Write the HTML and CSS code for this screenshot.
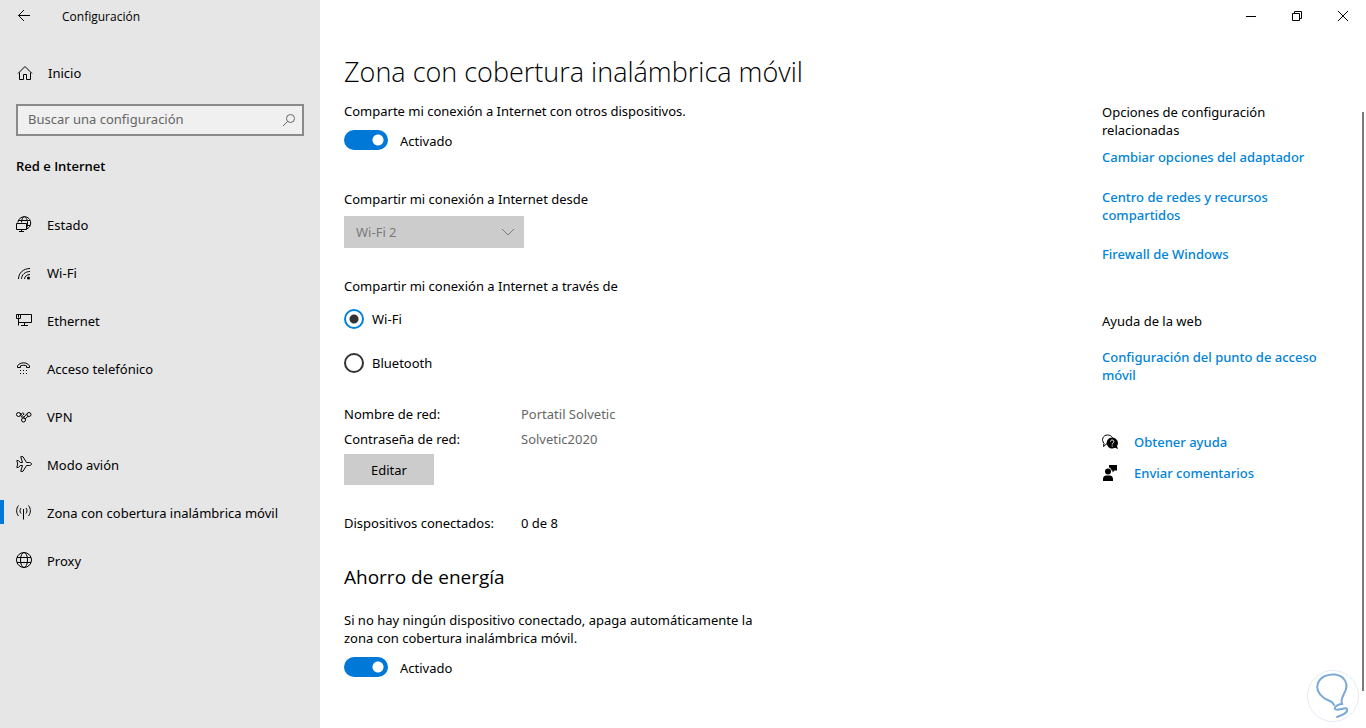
FILE: index.html
```html
<!DOCTYPE html>
<html lang="es">
<head>
    <meta charset="UTF-8">
    <meta name="viewport" content="width=device-width, initial-scale=1.0">
    <title>Configuración</title>
    <link rel="stylesheet" href="styles.css">
</head>
<body>
    <div class="window">
        <!-- Sidebar -->
        <aside class="sidebar">
            <div class="app-bar">
                <button class="back" aria-label="Atrás">
                    <svg width="16" height="16" viewBox="0 0 16 16"><path d="M14 7.500H2.500M8 2L2.500 7.500L8 13"/></svg>
                </button>
                <span class="app-name">Configuración</span>
            </div>
            <a class="nav-link home" href="#">
                <svg width="18" height="16" viewBox="0 0 18 16"><path d="M2 8.500L9 1.500L16 8.500M3.500 7.500V14.500H7.500V9.500H10.500V14.500H14.500V7.500"/></svg>
                Inicio
            </a>
            <div class="search">
                <input type="text" placeholder="Buscar una configuración" aria-label="Buscar una configuración">
                <svg width="14" height="14" viewBox="0 0 14 14"><circle cx="8.500" cy="5.500" r="4"/><path d="M5.500 8.500L1 13"/></svg>
            </div>
            <h2 class="section-name">Red e Internet</h2>
            <nav>
                <a class="nav-link" href="#">
                    <svg width="16" height="16" viewBox="0 0 16 16"><path d="M1.800 6.500C2.400 3 5 .700 8.500 .700C12 .700 14.700 3.500 14.700 7C14.700 10.200 12.800 12.300 10.500 13M2.500 4.500H14M11 9.500H14M5.500 6.500C5.700 3 7 .700 8.300 .700S11.500 3.500 11.500 7C11.500 8.800 11.200 10.500 10.700 12"/><path d="M.5 7.500H10.500V13.500H.5ZM5.500 13.500V15.500M3 15.500H8"/></svg>
                    Estado
                </a>
                <a class="nav-link" href="#">
                    <svg width="16" height="16" viewBox="0 0 16 16"><path d="M2.500 15C2.500 9 7.500 4.500 14 4.500M5.500 15C5.500 10.800 9.300 7.500 14 7.500M8.500 15C8.500 12.500 11 10.500 14 10.500"/><circle class="solid" cx="12.500" cy="14" r="1.500"/></svg>
                    Wi-Fi
                </a>
                <a class="nav-link" href="#">
                    <svg width="16" height="16" viewBox="0 0 16 16"><path d="M4.500 2.500H15.500V10.500H2.500V7M.5 2.500H4.500V6.500H.5ZM2.500 3V5.500M2.500 10V13.500M8.500 10.500V13.500M5 13.500H12"/></svg>
                    Ethernet
                </a>
                <a class="nav-link" href="#">
                    <svg width="16" height="16" viewBox="0 0 16 16"><path d="M1.500 7.500V6C3.500 1.800 11.500 1.800 13.500 6V7.500H10.500V5.800C9 5.100 6 5.100 4.500 5.800V7.500Z"/><path class="solid" d="M4 10h1v1h-1zM7 10h1v1h-1zM10 10h1v1h-1zM4 13h1v1h-1zM7 13h1v1h-1zM10 13h1v1h-1z"/></svg>
                    Acceso telefónico
                </a>
                <a class="nav-link" href="#">
                    <svg width="16" height="16" viewBox="0 0 16 16"><circle cx="2.500" cy="6.500" r="2"/><circle cx="13" cy="6.500" r="2"/><circle cx="7.500" cy="12" r="2"/><path d="M4 5L8.500 10.200M4.500 7.500L6.500 10.200M11.200 5.500L7.500 9.500M12 8.300L9 11M5.500 5.500C7 4.300 8.500 5 7.500 7"/></svg>
                    VPN
                </a>
                <a class="nav-link" href="#">
                    <svg width="16" height="16" viewBox="0 0 16 16"><path d="M.8 4.500H2.500L4.200 6.500H6.500L4.700 .700H7L10.500 6.500H13.500C14.800 6.500 15.500 7.200 15.500 8S14.800 9.500 13.500 9.500H10.500L7 15.300H4.700L6.500 9.500H4.200L2.500 11.500H.8L1.700 8Z"/></svg>
                    Modo avión
                </a>
                <a class="nav-link active" href="#" aria-current="page">
                    <svg width="16" height="16" viewBox="0 0 16 16"><path d="M7.500 5V15.500M5 4C3.700 5.500 3.700 8 5 9.500M2.500 1.500C0 4.500 0 9 2.500 12M10 4C11.300 5.500 11.300 8 10 9.500M12.500 1.500C15 4.500 15 9 12.500 12"/></svg>
                    Zona con cobertura inalámbrica móvil
                </a>
                <a class="nav-link" href="#">
                    <svg width="16" height="16" viewBox="0 0 16 16"><circle cx="8" cy="8" r="7.500"/><ellipse cx="8" cy="8" rx="3.500" ry="7.500"/><path d="M1 5.500H15M1 10.500H15"/></svg>
                    Proxy
                </a>
            </nav>
        </aside>

        <!-- Main area -->
        <div class="main">
            <div class="title-bar">
                <button aria-label="Minimizar"><svg width="12" height="12" viewBox="0 0 12 12"><path d="M1 6.500H11"/></svg></button>
                <button aria-label="Restaurar"><svg width="12" height="12" viewBox="0 0 12 12"><path d="M1.500 3.500H8.500V10.500H1.500ZM3.500 3.500V1.500H10.500V8.500H8.500"/></svg></button>
                <button aria-label="Cerrar"><svg width="12" height="12" viewBox="0 0 12 12"><path d="M1 1L11 11M11 1L1 11"/></svg></button>
            </div>
            <h1>Zona con cobertura inalámbrica móvil</h1>
            <div class="columns">
                <main class="settings">
                    <p>Comparte mi conexión a Internet con otros dispositivos.</p>
                    <label class="switch"><input type="checkbox" checked> <span>Activado</span></label>

                    <label class="field-label" for="source">Compartir mi conexión a Internet desde</label>
                    <div class="dropdown">
                        <select id="source" disabled>
                            <option>Wi-Fi 2</option>
                        </select>
                        <svg width="12" height="8" viewBox="0 0 12 8"><path d="M0 1L6 7L12 1"/></svg>
                    </div>

                    <fieldset>
                        <legend>Compartir mi conexión a Internet a través de</legend>
                        <label class="radio"><input type="radio" name="via" checked> Wi-Fi</label>
                        <label class="radio"><input type="radio" name="via"> Bluetooth</label>
                    </fieldset>

                    <dl class="network">
                        <dt>Nombre de red:</dt>
                        <dd>Portatil Solvetic</dd>
                        <dt>Contraseña de red:</dt>
                        <dd>Solvetic2020</dd>
                    </dl>
                    <button class="edit">Editar</button>
                    <dl class="devices">
                        <dt>Dispositivos conectados:</dt>
                        <dd>0 de 8</dd>
                    </dl>

                    <h2>Ahorro de energía</h2>
                    <p class="hint">Si no hay ningún dispositivo conectado, apaga automáticamente la zona con cobertura inalámbrica móvil.</p>
                    <label class="switch"><input type="checkbox" checked> <span>Activado</span></label>
                </main>

                <aside class="related">
                    <h3>Opciones de configuración relacionadas</h3>
                    <a href="#">Cambiar opciones del adaptador</a>
                    <a href="#">Centro de redes y recursos compartidos</a>
                    <a href="#">Firewall de Windows</a>
                    <h3 class="web-help">Ayuda de la web</h3>
                    <a href="#">Configuración del punto de acceso móvil</a>
                    <div class="support">
                        <svg width="18" height="16" viewBox="0 0 18 16"><path class="outline" d="M5 9.500L1.500 12.500L2 9.300C-1 6 1 1 5.500 1C8 1 9.500 2 10.500 3.500"/><path d="M10 3.500A5.500 5.500 0 1 0 13 13.700L16 15L15 12A5.500 5.500 0 0 0 10 3.500Z"/><path class="mark" d="M8.500 7.500C8.500 5.500 11.800 5.500 11.800 7.500C11.800 9 10.200 8.800 10.200 10.500M10.200 11.500V12.500"/></svg>
                        <a href="#">Obtener ayuda</a>
                    </div>
                    <div class="support">
                        <svg width="18" height="16" viewBox="0 0 18 16"><circle cx="6" cy="6.500" r="3"/><path d="M1 16V14C1 12 2.500 10.500 4 10.500H8C9.500 10.500 11 12 11 14V16ZM7 0H15V5.500H12.500L10.500 7.500V5.500H9.500C9.500 4 8.500 3 7 2.500Z"/></svg>
                        <a href="#">Enviar comentarios</a>
                    </div>
                </aside>
                <div class="scrollbar"></div>
            </div>
        </div>

        <svg class="badge" width="52" height="52" viewBox="0 0 52 52">
            <circle cx="26" cy="26" r="25.500"/>
            <path d="M27 35C25 30 21 31 17 28C11 24 9 18 11 13C14 6 22 4 28 4.500C36 5.500 41 12 39 19C37 26 33 28 35 34C31 34 27 37 28 39C30 42 39 36 40 39C41 43 36 45 30 47"/>
        </svg>
    </div>
</body>
</html>
```
FILE: styles.css
```css
* {
    box-sizing: border-box;
}

body {
    margin: 0;
    font-family: "Noto Sans", "Open Sans", sans-serif;
    font-size: 13px;
    line-height: 18px;
    color: #000;
    background: #fff;
}

h1, h2, h3, p, dl, dd, fieldset, legend {
    margin: 0;
    padding: 0;
    border: 0;
    font-weight: normal;
}

h1, h2 {
    font-family: "Open Sans", "Noto Sans", sans-serif;
}

h3 {
    font-size: 13px;
}

a {
    color: #0083da;
    text-decoration: none;
}

button, input, select {
    font: inherit;
    color: inherit;
    border: 0;
    border-radius: 0;
    margin: 0;
    padding: 0;
}

svg {
    flex: none;
    fill: none;
    stroke: #000;
}

.solid {
    fill: #000;
    stroke: none;
}

.window {
    display: flex;
    min-height: 100vh;
}

/* Sidebar */
.sidebar {
    flex: none;
    width: 320px;
    background: #e6e6e6;
}

.app-bar {
    display: flex;
    align-items: center;
    height: 32px;
}

.back {
    display: flex;
    align-items: center;
    justify-content: center;
    width: 48px;
    height: 32px;
    background: none;
}

.app-name {
    padding: 2px 0 0 14px;
    font-family: "Open Sans", "Noto Sans", sans-serif;
    font-size: 12px;
}

.nav-link {
    display: flex;
    align-items: center;
    gap: 15px;
    height: 48px;
    padding-left: 16px;
    color: #000;
}

.nav-link svg {
    margin-bottom: 2px;
}

.nav-link.home {
    gap: 14px;
    margin-top: 17px;
}

.nav-link.home svg {
    margin-bottom: 0;
}

.nav-link.active {
    background: linear-gradient(#0078d7, #0078d7) left 0 top 11px / 4px 24px no-repeat;
}

.search {
    display: flex;
    align-items: center;
    height: 32px;
    margin: 7px 16px 0;
    padding: 0 6px 0 10px;
    background: #f0f0f0;
    border: 2px solid #8a8a8a;
}

.search input {
    flex: 1;
    min-width: 0;
    padding-bottom: 2px;
    background: none;
    outline: none;
}

.search input::placeholder {
    color: #666;
    opacity: 1;
}

.search svg {
    stroke: #666;
}

.section-name {
    margin: 21px 16px 26px;
    font-size: 13px;
    font-weight: 600;
}

/* Main area */
.main {
    flex: 1;
    display: flex;
    flex-direction: column;
    min-width: 0;
}

.title-bar {
    display: flex;
    justify-content: flex-end;
    height: 32px;
}

.title-bar button {
    display: flex;
    align-items: center;
    justify-content: center;
    width: 46px;
    background: none;
}

h1 {
    margin: 20px 24px 10px;
    font-size: 27px;
    font-weight: 300;
    line-height: 40px;
}

.columns {
    flex: 1;
    display: flex;
    padding-left: 24px;
}

.settings {
    flex: 1;
}

.switch {
    display: flex;
    align-items: center;
    gap: 12px;
    height: 20px;
    margin-top: 10px;
}

.switch span {
    padding-top: 2px;
}

.switch input {
    appearance: none;
    width: 44px;
    height: 20px;
    border-radius: 10px;
    background: radial-gradient(circle at 34px 10px, #fff 5px, #0078d7 6px);
}

.field-label {
    display: block;
    margin-top: 40px;
}

.dropdown {
    position: relative;
    width: 180px;
    margin-top: 8px;
}

.dropdown select {
    appearance: none;
    display: block;
    width: 100%;
    height: 32px;
    padding: 0 12px;
    background: #ccc;
    color: #7a7a7a;
    opacity: 1;
}

.dropdown svg {
    position: absolute;
    right: 10px;
    top: 12px;
    stroke: #7a7a7a;
}

fieldset {
    margin-top: 29px;
}

.radio {
    display: flex;
    align-items: center;
    gap: 8px;
    height: 20px;
    margin-top: 24px;
}

legend + .radio {
    margin-top: 14px;
}

.radio input {
    appearance: none;
    width: 20px;
    height: 20px;
    border: 2px solid #333;
    border-radius: 50%;
}

.radio input:checked {
    border-color: #0083da;
    background: radial-gradient(circle at center, #333 4px, #fff 5px);
}

dl {
    display: grid;
    grid-template-columns: 177px 1fr;
    row-gap: 7px;
}

.network {
    margin-top: 32px;
}

.network dd {
    color: #666;
}

.edit {
    display: block;
    width: 90px;
    height: 31px;
    margin-top: 6px;
    background: #ccc;
}

.devices {
    margin-top: 29px;
}

.settings h2 {
    margin-top: 31px;
    font-size: 19px;
    line-height: 28px;
}

.hint {
    max-width: 430px;
    margin-top: 20px;
}

/* Related links */
.related {
    display: flex;
    flex-direction: column;
    align-items: flex-start;
    width: 220px;
    margin-right: 40px;
}

.related h3 {
    margin-top: 1px;
}

.related a {
    font-weight: 500;
}

.related > a {
    margin-bottom: 21px;
}

.related h3 + a {
    margin-top: 9px;
    margin-bottom: 22px;
}

.related .web-help {
    margin-top: 28px;
}

.related .web-help + a {
    margin: 18px 0 38px;
}

.support {
    display: flex;
    align-items: center;
    gap: 14px;
    margin-top: 11px;
    margin-bottom: 2px;
}

.support svg {
    fill: #000;
    stroke: none;
}

.support .outline {
    fill: none;
    stroke: #000;
}

.support .mark {
    fill: none;
    stroke: #fff;
}

.scrollbar {
    width: 2px;
    margin: 10px 2px 37px 0;
    background: #7a7a7a;
}

.badge {
    position: fixed;
    right: 7px;
    bottom: 6px;
    fill: #fff;
    stroke: #e4eaf5;
}

.badge path {
    fill: none;
    stroke: #79a9d9;
    stroke-width: 2;
    stroke-linecap: round;
}
```
